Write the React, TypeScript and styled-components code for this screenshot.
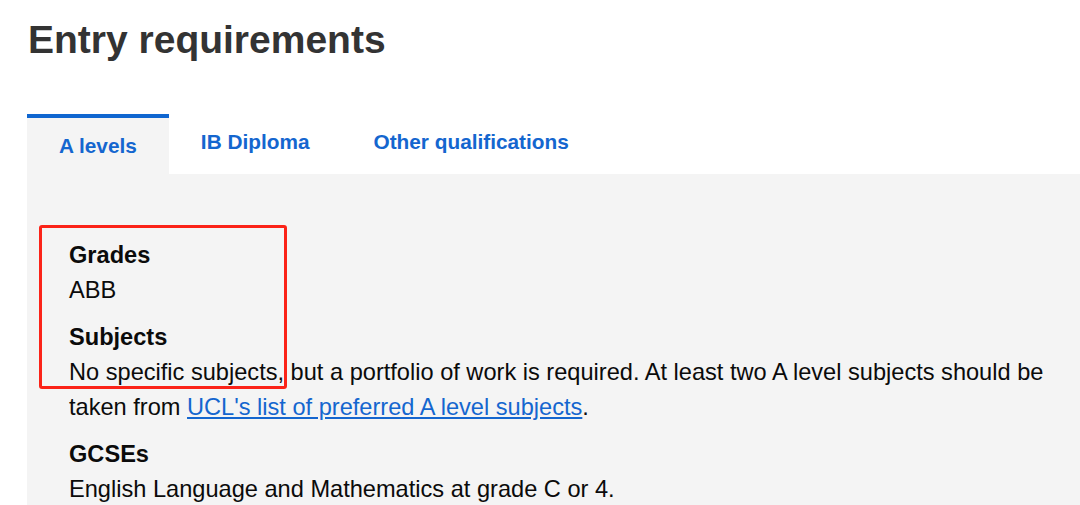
import React from "react";
import styled, { createGlobalStyle } from "styled-components";

const GlobalStyle = createGlobalStyle`
  html, body {
    margin: 0;
    padding: 0;
    background: #ffffff;
    font-family: "Liberation Sans", Arial, sans-serif;
  }
`;

const tabs = ["A levels", "IB Diploma", "Other qualifications"];

const App: React.FC = () => {
  return (
    <Page>
      <GlobalStyle />
      <Title>Entry requirements</Title>
      <TabBar>
        {tabs.map((t, i) => (
          <Tab key={t} $active={i === 0}>
            {t}
          </Tab>
        ))}
      </TabBar>
      <Panel>
        <Highlight />
        <Group>
          <Label>Grades</Label>
          <Text>ABB</Text>
        </Group>
        <Group>
          <Label>Subjects</Label>
          <Text>
            No specific subjects, but a portfolio of work is required. At least
            two A level subjects should be taken from{" "}
            <Link href="#">UCL's list of preferred A level subjects</Link>.
          </Text>
        </Group>
        <Group>
          <Label>GCSEs</Label>
          <Text>English Language and Mathematics at grade C or 4.</Text>
        </Group>
      </Panel>
    </Page>
  );
};

export default App;

const Page = styled.div`
  padding: 12px 0 0 27px;
  overflow: hidden;
  height: 493px;
`;

const Title = styled.h1`
  margin: 0 0 47px 1px;
  font-size: 39px;
  line-height: 55px;
  font-weight: bold;
  color: #333333;
`;

const TabBar = styled.div`
  display: flex;
  flex-direction: row;
  align-items: flex-start;
`;

const Tab = styled.div<{ $active?: boolean }>`
  padding: 16px 32px ${(p) => (p.$active ? "16px" : "20px")};
  border-top: ${(p) => (p.$active ? "4px solid #0f66d0" : "0")};
  background: ${(p) => (p.$active ? "#f4f4f4" : "transparent")};
  color: #1466cf;
  font-size: 20.8px;
  line-height: 24px;
  font-weight: bold;
  cursor: pointer;
`;

const Panel = styled.div`
  position: relative;
  background: #f4f4f4;
  padding: 63px 20px 40px 42px;
`;

const Highlight = styled.div`
  position: absolute;
  left: 12px;
  top: 51px;
  width: 242px;
  height: 158px;
  border: 3px solid #fb2318;
  border-radius: 3px;
  pointer-events: none;
`;

const Group = styled.div`
  margin-bottom: 11px;
`;

const Label = styled.h3`
  margin: 0;
  font-size: 23.6px;
  line-height: 36px;
  font-weight: bold;
  color: #0b0b0b;
`;

const Text = styled.p`
  margin: 0;
  font-size: 23.6px;
  line-height: 35px;
  color: #0b0b0b;
`;

const Link = styled.a`
  color: #1466cf;
  text-decoration: underline;
`;
